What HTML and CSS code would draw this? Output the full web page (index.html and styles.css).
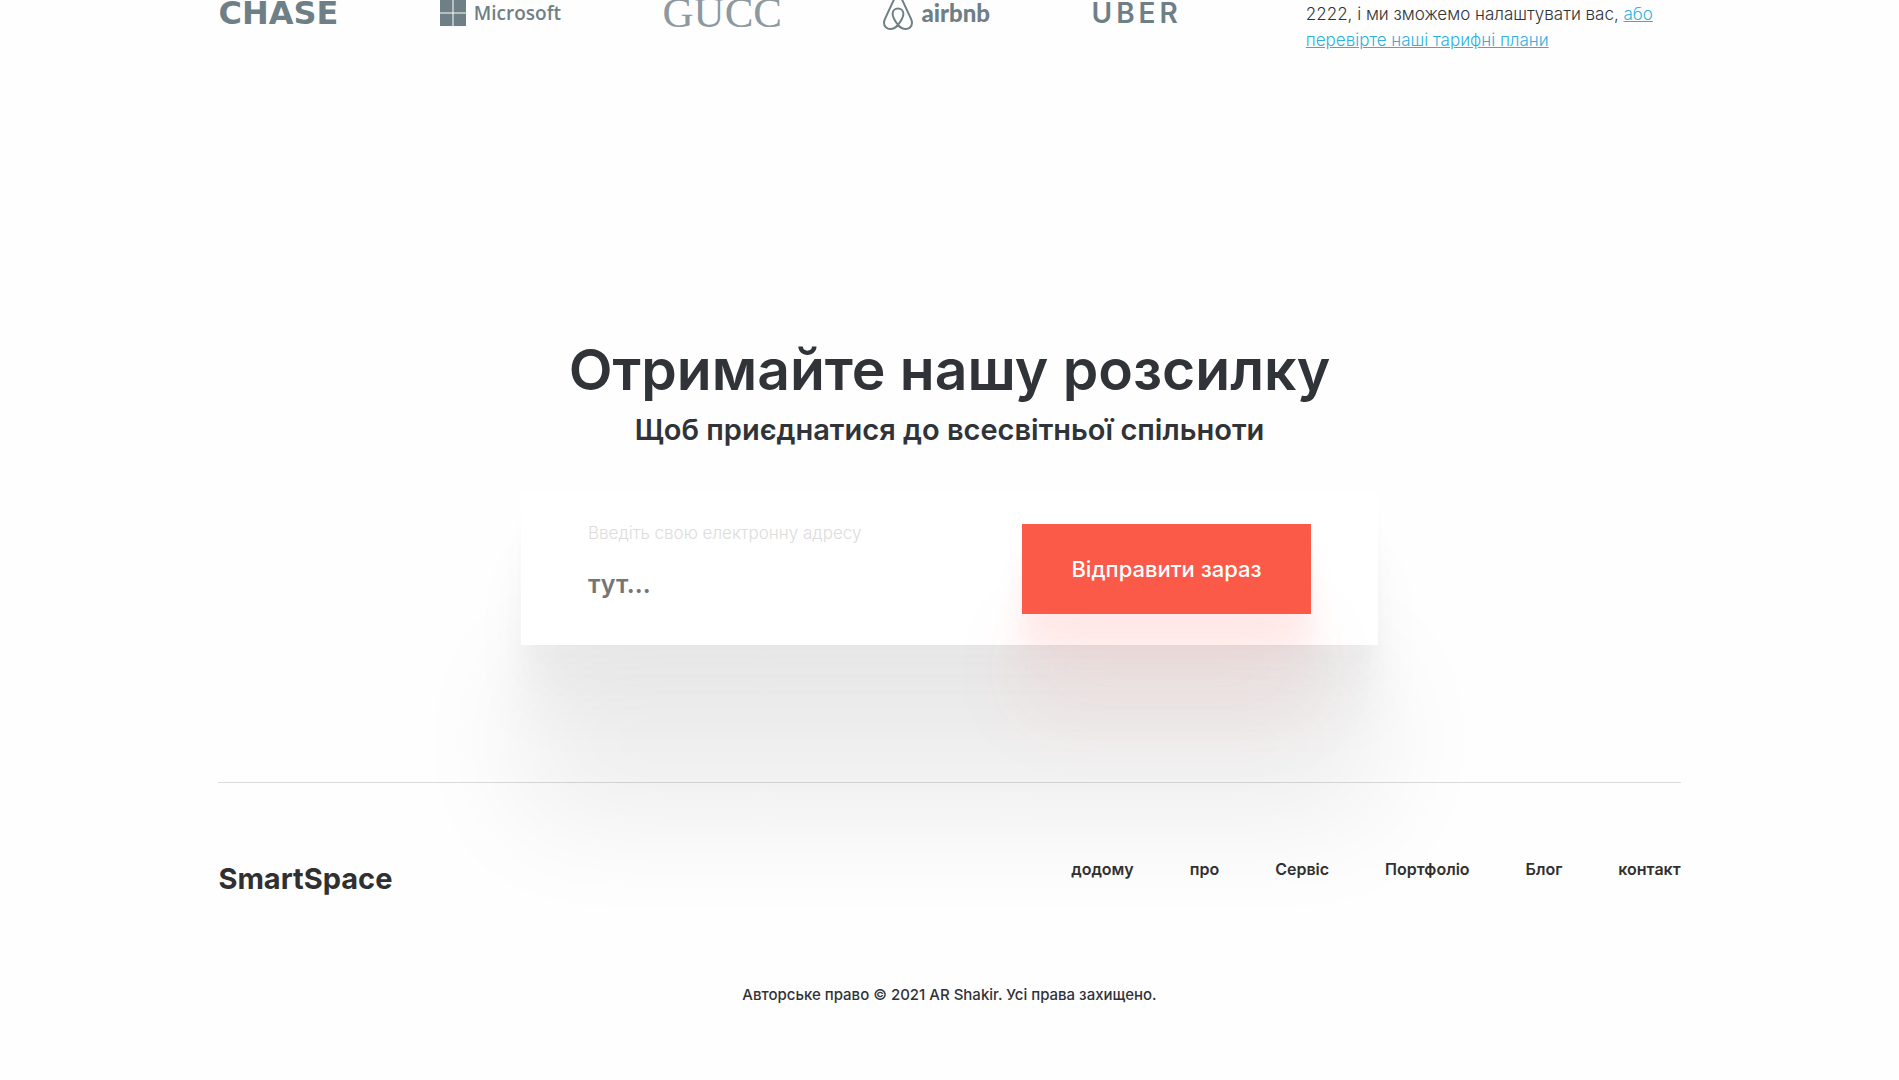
FILE: index.html
```html
<!DOCTYPE html>
<html lang="uk">
<head>
<meta charset="utf-8">
<meta name="viewport" content="width=device-width, initial-scale=1">
<title>SmartSpace</title>
<link rel="stylesheet" href="styles.css">
</head>
<body>
<main>
  <section class="container partners">
    <div class="logos">
      <span class="logo logo-chase">CHASE</span>
      <span class="logo logo-microsoft">
        <svg width="26" height="26" viewBox="0 0 26 26" aria-hidden="true"><path fill="currentColor" d="M0 0h12.500v12.500H0zM13.500 0H26v12.500H13.500zM0 13.500h12.500V26H0zM13.500 13.500H26V26H13.500z"/></svg>
        Microsoft
      </span>
      <span class="logo logo-gucci">GUCC</span>
      <span class="logo logo-airbnb">
        <svg width="30" height="34" viewBox="0 0 30 34" aria-hidden="true"><path fill="none" stroke="currentColor" stroke-width="2" d="M15 29C11.500 24.500 9.600 21 9.600 17.800C9.600 14.600 12 12.500 15 12.500S20.400 14.600 20.400 17.800C20.400 21 18.500 24.500 15 29C12.300 32.200 9.600 33 7.300 33C3.800 33 1 30.300 1 26.800C1 25.300 1.500 24 2.200 22.400L10.700 4.200C11.800 2 13 1 15 1S18.200 2 19.300 4.200L27.800 22.400C28.500 24 29 25.300 29 26.800C29 30.300 26.200 33 22.700 33C20.400 33 17.700 32.200 15 29Z"/></svg>
        airbnb
      </span>
      <span class="logo logo-uber">UBER</span>
    </div>
    <p class="partners-note">2222, і ми зможемо налаштувати вас, <a href="#plans">або перевірте наші тарифні плани</a></p>
  </section>

  <section class="newsletter">
    <h2>Отримайте нашу розсилку</h2>
    <p class="subtitle">Щоб приєднатися до всесвітньої спільноти</p>
    <form class="card">
      <div class="field">
        <label for="email">Введіть свою електронну адресу</label>
        <input id="email" type="email" placeholder="тут...">
      </div>
      <button type="submit">Відправити зараз</button>
    </form>
  </section>
</main>

<footer class="container footer">
  <div class="footer-row">
    <a class="brand" href="#home">SmartSpace</a>
    <nav>
      <a href="#home">додому</a>
      <a href="#about">про</a>
      <a href="#service">Сервіс</a>
      <a href="#portfolio">Портфоліо</a>
      <a href="#blog">Блог</a>
      <a href="#contact">контакт</a>
    </nav>
  </div>
  <p class="copyright">Авторське право © 2021 AR Shakir. Усі права захищено.</p>
</footer>
</body>
</html>
```
FILE: styles.css
```css
* {
  box-sizing: border-box;
}

body {
  margin: 0;
  overflow-x: hidden;
  background: #fefefe;
  color: #303338;
  font-family: Inter, "Open Sans", sans-serif;
}

h2,
p {
  margin: 0;
}

.container {
  width: 77%;
  margin: 0 auto;
}

.partners {
  display: grid;
  grid-template-columns: 964fr 375fr;
  gap: 124px;
}

.logos {
  display: flex;
  align-items: center;
  justify-content: space-between;
  height: 26px;
  color: #6f7f86;
}

.logo {
  display: flex;
  align-items: center;
  gap: 8px;
  line-height: 26px;
  white-space: nowrap;
}

.logo-chase {
  font-family: "DejaVu Sans", sans-serif;
  font-size: 32px;
  font-weight: 700;
}

.logo-microsoft {
  font-family: "Open Sans", sans-serif;
  font-size: 19px;
  font-weight: 600;
}

.logo-gucci {
  color: #8d999f;
  font-family: "Liberation Serif", serif;
  font-size: 43px;
}

.logo-airbnb {
  font-family: Lato, sans-serif;
  font-size: 24px;
  font-weight: 900;
}

.logo-uber {
  font-size: 28px;
  font-weight: 600;
  letter-spacing: 4px;
}

.partners-note {
  padding-top: 1px;
  color: #303338;
  font-size: 17px;
  font-weight: 300;
  line-height: 26px;
}

.partners-note a {
  color: #2fb1e0;
}

.newsletter {
  display: flex;
  flex-direction: column;
  align-items: center;
  padding-top: 279px;
}

.newsletter h2 {
  font-size: 57px;
  font-weight: 600;
  line-height: 76px;
}

.subtitle {
  font-size: 29px;
  font-weight: 600;
  line-height: 44px;
}

.card {
  display: flex;
  justify-content: space-between;
  width: 857px;
  max-width: 100%;
  margin-top: 40px;
  padding: 32px 67px 31px;
  background: #fff;
  box-shadow:
    0 172px 120px rgba(0, 0, 0, 0.07),
    0 72px 56px rgba(0, 0, 0, 0.04),
    0 38px 30px rgba(0, 0, 0, 0.02),
    0 16px 12px rgba(0, 0, 0, 0.01);
}

.field {
  display: flex;
  flex-direction: column;
  gap: 22px;
}

.field label {
  color: #dcdcdc;
  font-size: 17px;
  font-weight: 300;
  line-height: 18px;
}

.field input {
  width: 320px;
  padding: 0;
  border: 0;
  outline: 0;
  background: transparent;
  font: 600 25px/40px Inter, sans-serif;
}

.field input::placeholder {
  color: #757575;
}

.card button {
  width: 289px;
  height: 90px;
  padding: 0;
  border: 0;
  background: #fa5a47;
  box-shadow:
    0 100px 80px rgba(251, 90, 71, 0.08),
    0 42px 33px rgba(255, 60, 60, 0.06),
    0 22px 18px rgba(255, 60, 60, 0.03);
  color: #fff;
  font: 500 22px/30px Inter, sans-serif;
}

.footer {
  margin-top: 137px;
  border-top: 1px solid #dcdcde;
}

.footer-row {
  display: flex;
  align-items: flex-start;
  justify-content: space-between;
  padding-top: 76px;
}

.footer a {
  color: #303030;
  text-decoration: none;
}

.brand {
  font-size: 29px;
  font-weight: 700;
  line-height: 40px;
}

.footer nav {
  display: flex;
  gap: 56px;
  font-size: 16px;
  font-weight: 600;
  line-height: 20px;
}

.copyright {
  margin-top: 86px;
  padding-bottom: 64px;
  font-size: 15px;
  font-weight: 500;
  line-height: 20px;
  text-align: center;
}
```
